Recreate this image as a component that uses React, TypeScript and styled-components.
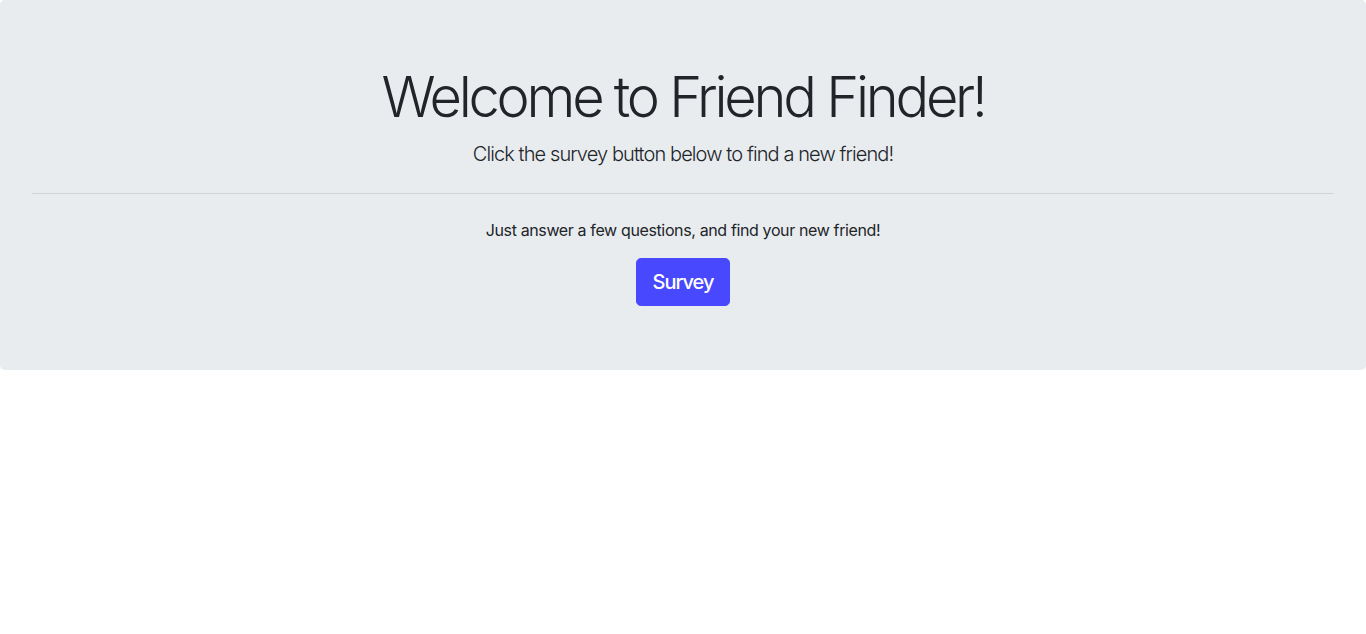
import React from "react";
import styled, { createGlobalStyle } from "styled-components";

const GlobalStyle = createGlobalStyle`
  html, body { margin: 0; padding: 0; background: #fff; }
  body {
    font-family: Inter, "Noto Sans", "Liberation Sans", sans-serif;
    color: #212529;
    font-size: 16px;
    line-height: 1.5;
  }
  * { box-sizing: border-box; }
`;

const Jumbotron = styled.section`
  background: #e9ecef;
  padding: 64px 32px;
  border-radius: 4.8px;
  margin-bottom: 32px;
  text-align: center;
  display: flex;
  flex-direction: column;
  align-items: center;
`;

const Title = styled.h1`
  margin: 0 0 8px;
  font-size: 56px;
  font-weight: 300;
  line-height: 1.2;
  letter-spacing: -3.25px;
`;

const Lead = styled.p`
  margin: 0 0 16px;
  font-size: 20px;
  font-weight: 300;
  line-height: 1.5;
  letter-spacing: -0.9px;
`;

const Rule = styled.hr`
  align-self: stretch;
  margin: 8px 0 24px;
  border: 0;
  border-top: 1px solid rgba(0, 0, 0, 0.1);
`;

const Text = styled.p`
  margin: 0 0 16px;
  font-size: 16px;
  line-height: 1.5;
  letter-spacing: -0.37px;
`;

const Button = styled.a`
  display: inline-block;
  background: #4848ff;
  color: #fff;
  border: 1px solid #4848ff;
  border-radius: 4.8px;
  padding: 8px 16px;
  font-size: 20px;
  line-height: 1.5;
  font-weight: 500;
  letter-spacing: -1px;
  text-decoration: none;
  cursor: pointer;
`;

export default function App() {
  return (
    <>
      <GlobalStyle />
      <Jumbotron>
        <Title>Welcome to Friend Finder!</Title>
        <Lead>Click the survey button below to find a new friend!</Lead>
        <Rule />
        <Text>Just answer a few questions, and find your new friend!</Text>
        <Button href="#">Survey</Button>
      </Jumbotron>
    </>
  );
}
